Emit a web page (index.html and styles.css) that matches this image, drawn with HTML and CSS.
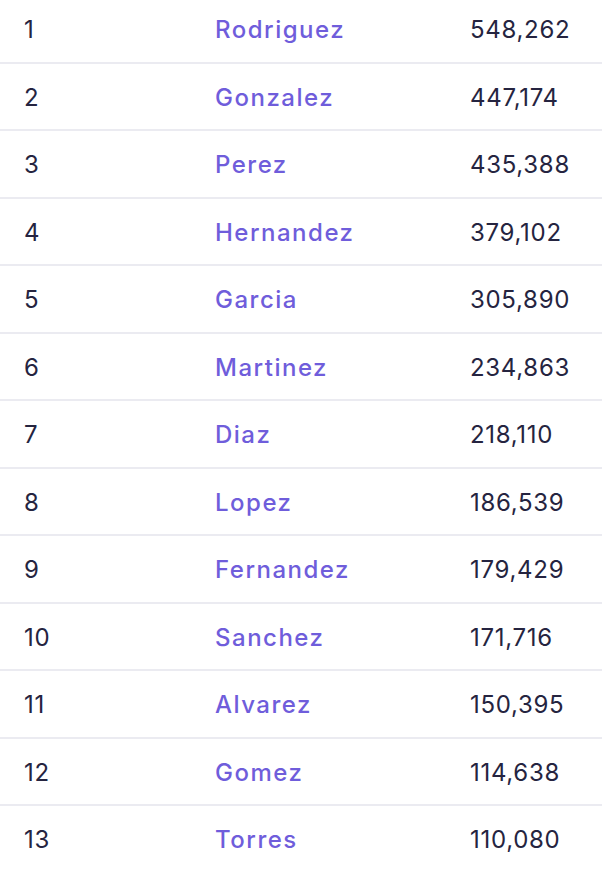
FILE: index.html
```html
<!DOCTYPE html>
<html>
<head>
<meta charset="utf-8">
<link rel="stylesheet" href="styles.css">
</head>
<body>
<table class="surnames">
<tbody>
<tr><td class="rank">1</td><td class="name">Rodriguez</td><td class="count">548,262</td></tr>
<tr><td class="rank">2</td><td class="name">Gonzalez</td><td class="count">447,174</td></tr>
<tr><td class="rank">3</td><td class="name">Perez</td><td class="count">435,388</td></tr>
<tr><td class="rank">4</td><td class="name">Hernandez</td><td class="count">379,102</td></tr>
<tr><td class="rank">5</td><td class="name">Garcia</td><td class="count">305,890</td></tr>
<tr><td class="rank">6</td><td class="name">Martinez</td><td class="count">234,863</td></tr>
<tr><td class="rank">7</td><td class="name">Diaz</td><td class="count">218,110</td></tr>
<tr><td class="rank">8</td><td class="name">Lopez</td><td class="count">186,539</td></tr>
<tr><td class="rank">9</td><td class="name">Fernandez</td><td class="count">179,429</td></tr>
<tr><td class="rank">10</td><td class="name">Sanchez</td><td class="count">171,716</td></tr>
<tr><td class="rank">11</td><td class="name">Alvarez</td><td class="count">150,395</td></tr>
<tr><td class="rank">12</td><td class="name">Gomez</td><td class="count">114,638</td></tr>
<tr><td class="rank">13</td><td class="name">Torres</td><td class="count">110,080</td></tr>
</tbody>
</table>
</body>
</html>
```
FILE: styles.css
```css
html, body {
  margin: 0;
  padding: 0;
  background: #ffffff;
}
body {
  font-family: Inter, "Open Sans", sans-serif;
  font-size: 24px;
  color: #252440;
  overflow: hidden;
}
.surnames {
  width: 100%;
  border-collapse: collapse;
  margin-top: -5px;
}
.surnames tr {
  height: 67.5px;
  border-bottom: 2px solid #ebebf1;
}
.surnames td {
  padding: 0;
  padding-top: 2px;
  vertical-align: middle;
}
.rank {
  width: 191px;
  padding-left: 24px !important;
  letter-spacing: 0.7px;
}
.name {
  width: 255px;
  color: #6f5ddb;
  font-weight: 500;
  letter-spacing: 1.5px;
}
.count {
  color: #252440;
  letter-spacing: 0.7px;
}
```
